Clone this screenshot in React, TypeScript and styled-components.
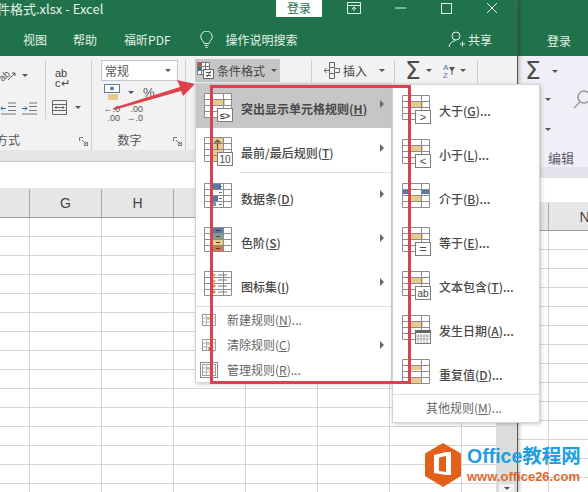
import React from 'react';
import styled, { createGlobalStyle } from 'styled-components';

const GlobalStyle = createGlobalStyle`
  html, body {
    margin: 0;
    padding: 0;
    width: 588px;
    height: 492px;
    overflow: hidden;
    background: #fff;
    font-family: "Noto Sans CJK SC", "Liberation Sans", sans-serif;
  }
`;

const Desktop = styled.div`
  position: relative;
  display: flex;
  width: 588px;
  height: 492px;
  overflow: hidden;
`;

const FrontWindow = styled.div`
  display: flex;
  flex-direction: column;
  width: 518px;
  height: 492px;
  flex: none;
  border-right: 1px solid #4d5a52;
  box-sizing: border-box;
  box-shadow: 2px 0 3px rgba(0, 0, 0, 0.2);
  position: relative;
  z-index: 1;
`;

const BackWindow = styled.div`
  display: flex;
  flex-direction: column;
  flex: 1;
  min-width: 0;
`;

const TitleBar = styled.div`
  display: flex;
  height: 28px;
  background: #20724a;
  color: #e9f3ed;
  overflow: hidden;
`;

const DocTitle = styled.div`
  width: 276px;
  flex: none;
  margin-left: -3px;
  font-size: 13px;
  line-height: 17px;
  white-space: pre;
`;

const SignIn = styled.div`
  width: 46px;
  height: 17px;
  margin-left: 3px;
  background: #fff;
  color: #20724a;
  font-size: 12px;
  line-height: 15px;
  text-align: center;
  flex: none;
`;

const WindowButtons = styled.div`
  display: flex;
  margin-left: 9px;
`;

const WindowButton = styled.div`
  width: 46px;
  height: 16px;
  display: flex;
  align-items: center;
  justify-content: center;
  svg { display: block; }
`;

const TabBar = styled.div`
  display: flex;
  align-items: center;
  gap: 26px;
  height: 28px;
  padding: 0 25px 6px 23px;
  box-sizing: border-box;
  background: #20724a;
  color: #e6f1ea;
  font-size: 12px;
`;

const BackTabBar = styled(TabBar)`
  padding: 0 0 4px 29px;
  white-space: nowrap;
`;

const PdfTab = styled.span`
  margin-left: 1px;
`;

const SearchHint = styled.div`
  display: flex;
  align-items: center;
  gap: 13px;
  margin-left: 3px;
`;

const Share = styled.div`
  display: flex;
  align-items: center;
  gap: 2px;
  margin-left: auto;
`;

const Ribbon = styled.div`
  display: flex;
  height: 94px;
  background: #f2f2f2;
  color: #444;
`;

const RibbonGroup = styled.div<{ $w: number }>`
  display: flex;
  flex-direction: column;
  width: ${p => p.$w}px;
  flex: none;
  box-sizing: border-box;
  margin-top: 4px;
  border-right: 1px solid #cfcfcf;
`;

const GroupBody = styled.div`
  flex: 1;
  display: flex;
  min-height: 0;
`;

const GroupFooter = styled.div<{ $start?: boolean; $shift?: number }>`
  height: 22px;
  display: flex;
  align-items: center;
  justify-content: ${p => (p.$start ? 'flex-start' : 'center')};
  padding-right: ${p => p.$shift ?? 0}px;
  position: relative;
  font-size: 12px;
  color: #555;
  white-space: nowrap;
  overflow: hidden;
`;

const ClippedLabel = styled.span`
  margin-left: -4px;
`;

const Launcher = styled.svg`
  position: absolute;
  right: 3px;
  bottom: 4px;
`;

const ToolColumn = styled.div<{ $w?: number; $divided?: boolean }>`
  display: flex;
  flex-direction: column;
  justify-content: space-between;
  width: ${p => (p.$w ? `${p.$w}px` : 'auto')};
  box-sizing: border-box;
  margin-bottom: 9px;
  padding: 8px 0 4px;
  border-right: ${p => (p.$divided ? '1px solid #cfcfcf' : 'none')};
  flex: none;
`;

const ToolRow = styled.div<{ $gap?: number; $left?: number; $top?: number }>`
  display: flex;
  align-items: center;
  gap: ${p => p.$gap ?? 6}px;
  padding-left: ${p => p.$left ?? 0}px;
  margin-top: ${p => p.$top ?? 0}px;
`;

const Caret = styled.span<{ $left?: number }>`
  display: inline-block;
  width: 0;
  height: 0;
  margin-left: ${p => p.$left ?? 0}px;
  border-left: 3px solid transparent;
  border-right: 3px solid transparent;
  border-top: 3px solid #555;
  flex: none;
`;

const WrapGlyph = styled.div`
  width: 16px;
  font-family: "Liberation Sans", sans-serif;
  font-size: 11px;
  line-height: 10px;
  color: #444;
  padding-left: 1px;
`;

const NumberColumn = styled.div`
  display: flex;
  flex-direction: column;
  width: 100%;
`;

const Combo = styled.div`
  display: flex;
  align-items: center;
  justify-content: space-between;
  width: 77px;
  height: 21px;
  margin-left: 9px;
  padding: 0 6px 0 3px;
  box-sizing: border-box;
  background: #fff;
  border: 1px solid #c6c6c6;
  font-size: 12px;
  color: #555;
`;

const Percent = styled.span`
  margin-left: 1px;
  font-family: "Liberation Sans", sans-serif;
  font-size: 13px;
  color: #555;
`;

const DecimalGlyph = styled.div`
  width: 17px;
  font-family: "Liberation Sans", sans-serif;
  font-size: 9px;
  line-height: 9px;
  color: #555;
  text-align: right;
  b { color: #3f6f94; font-weight: 400; }
`;

const CommandButton = styled.div<{ $active?: boolean; $left: number; $w: number }>`
  display: flex;
  align-items: center;
  gap: 3px;
  width: ${p => p.$w}px;
  height: 23px;
  margin: -1px 0 0 ${p => p.$left}px;
  padding-left: 2px;
  box-sizing: border-box;
  background: ${p => (p.$active ? '#c6c6c6' : 'transparent')};
  font-size: 12px;
  color: #444;
  flex: none;
`;

const SumRow = styled.div`
  display: flex;
  align-items: center;
  align-self: flex-start;
  gap: 5px;
  height: 21px;
  padding-left: 10px;
`;

const SortIcon = styled.svg`
  margin-left: 6px;
`;

const SumSign = styled.span`
  font-family: "DejaVu Sans", sans-serif;
  font-size: 25px;
  line-height: 20px;
  color: #4a4a4a;
`;

const FormulaBand = styled.div`
  height: 11px;
  background: #e6e6e6;
  border-bottom: 1px solid #c9c9c9;
  flex: none;
`;

const FormulaBar = styled.div<{ $h: number }>`
  height: ${p => p.$h}px;
  background: #fff;
  flex: none;
`;

const HeaderRow = styled.div<{ $h: number }>`
  display: flex;
  height: ${p => p.$h}px;
  background: #e6e6e6;
  border-bottom: 1px solid #9c9c9c;
  box-sizing: border-box;
  flex: none;
  overflow: hidden;
`;

const HeaderCell = styled.div<{ $w: number }>`
  width: ${p => p.$w}px;
  flex: none;
  box-sizing: border-box;
  margin-top: 1px;
  border-right: 1px solid #a8a8a8;
  font-family: "Liberation Sans", sans-serif;
  font-size: 14px;
  line-height: 28px;
  color: #444;
  text-align: center;
`;

const SheetArea = styled.div`
  flex: 1;
  display: flex;
  min-height: 0;
`;

const Cells = styled.div<{ $x: number; $y: number }>`
  flex: 1;
  background-color: #fff;
  background-image:
    linear-gradient(to right, #d6d6d6 1px, transparent 1px),
    linear-gradient(to bottom, #d6d6d6 1px, transparent 1px);
  background-size: 72px 19px;
  background-position: ${p => p.$x}px ${p => p.$y}px;
`;

const ScrollTrack = styled.div`
  display: flex;
  flex-direction: column;
  justify-content: flex-end;
  align-items: center;
  width: 21px;
  background: #dcdedc;
  flex: none;
`;

const ScrollButton = styled.div`
  display: flex;
  align-items: center;
  justify-content: center;
  width: 15px;
  height: 8px;
  background: #f4f4f4;
`;

const BackRibbon = styled.div`
  display: grid;
  grid-template-rows: 30px 26px 34px 21px;
  height: 111px;
  background: #f0eff7;
  color: #555;
`;

const BackRow = styled.div<{ $left: number }>`
  display: flex;
  align-items: center;
  gap: 11px;
  padding-left: ${p => p.$left}px;
  white-space: nowrap;
  overflow: hidden;
`;

const SearchGlass = styled.svg`
  flex: none;
  margin-left: 11px;
`;

const BackLabel = styled.div`
  padding: 3px 0 0 30px;
  font-size: 13px;
  line-height: 18px;
  color: #5c5c6a;
`;

const BackBand = styled.div`
  height: 11px;
  background: #e4e3ec;
  flex: none;
`;

const Menu = styled.div<{ $left: number; $top: number; $w: number; $z: number }>`
  position: absolute;
  left: ${p => p.$left}px;
  top: ${p => p.$top}px;
  width: ${p => p.$w}px;
  z-index: ${p => p.$z};
  box-sizing: border-box;
  background: #fff;
  border: 1px solid #d4d4d4;
  box-shadow: 1px 1px 4px rgba(0, 0, 0, 0.22);
  color: #484848;
`;

const BigRow = styled.div<{ $active?: boolean; $pad: number }>`
  display: flex;
  align-items: center;
  gap: 6px;
  height: 44px;
  padding: 4px 7px 0 ${p => p.$pad}px;
  box-sizing: border-box;
  background: ${p => (p.$active ? '#c6c6c6' : 'transparent')};
  font-size: 12px;
  font-weight: ${p => (p.$active ? 700 : 500)};
  white-space: nowrap;
  svg { flex: none; }
`;

const RowArrow = styled.span<{ $lift?: number }>`
  margin-left: auto;
  margin-top: ${p => -(p.$lift ?? 0)}px;
  width: 0;
  height: 0;
  border-top: 4px solid transparent;
  border-bottom: 4px solid transparent;
  border-left: 4px solid #666;
  flex: none;
`;

const SmallRow = styled.div`
  display: flex;
  align-items: center;
  gap: 6px;
  height: 25px;
  padding: 0 7px 0 3px;
  font-size: 12px;
  color: #666;
  svg { flex: none; }
`;

const MenuRule = styled.div<{ $inset?: number; $after?: number }>`
  height: 1px;
  margin-left: ${p => p.$inset ?? 0}px;
  margin-bottom: ${p => p.$after ?? 0}px;
  background: #dedede;
`;

const SubList = styled.div`
  padding-top: 1px;
`;

const FooterRow = styled.div`
  height: 27px;
  line-height: 26px;
  padding-left: 33px;
  font-size: 12px;
  color: #666;
`;

const Key = styled.u`
  text-underline-offset: 1px;
`;

const RedFrame = styled.div`
  position: absolute;
  left: 210px;
  top: 85px;
  width: 201px;
  height: 299px;
  box-sizing: border-box;
  border: 3px solid #d8434f;
  z-index: 5;
  pointer-events: none;
`;

const ArrowOverlay = styled.svg`
  position: absolute;
  left: 110px;
  top: 76px;
  z-index: 5;
`;

const Watermark = styled.div`
  position: absolute;
  left: 425px;
  top: 443px;
  display: flex;
  gap: 6px;
  z-index: 6;
`;

const WatermarkText = styled.div`
  display: flex;
  flex-direction: column;
  font-family: "Liberation Sans", "Noto Sans CJK SC", sans-serif;
  font-weight: 700;
  white-space: nowrap;
`;

const BrandName = styled.div`
  font-size: 19.5px;
  line-height: 26px;
  color: #1f9fe2;
`;

const BrandUrl = styled.div`
  font-size: 13px;
  line-height: 16px;
  color: #e2682a;
`;

type RuleKind = 'highlight' | 'top' | 'bars' | 'scale' | 'icons' | 'gt' | 'lt' | 'between' | 'eq' | 'text' | 'date' | 'dup';

const Tag = ({ label, size = 9 }: { label: string; size?: number }) => (
  <g>
    <rect x="14.5" y="16.5" width="15" height="13" fill="#fff" stroke="#7c7c7c" />
    <text x="22" y="26.5" fontSize={size} textAnchor="middle" fontFamily="Liberation Sans, sans-serif" fill="#444">{label}</text>
  </g>
);

function RuleIcon({ kind }: { kind: RuleKind }) {
  const orange = '#ecc88a';
  return (
    <svg width="32" height="32" viewBox="0 0 32 32">
      <rect x="1.5" y="1.5" width="27" height="24" fill="#fff" />
      {kind === 'top' && <rect x="10" y="2" width="11" height="23" fill={orange} />}
      {['highlight', 'gt', 'lt', 'eq', 'text', 'date'].includes(kind) && <rect x="10" y="7" width="12" height="6" fill={orange} />}
      {kind === 'between' && (
        <>
          <rect x="2" y="7" width="7" height="5" fill="#4f7ba6" />
          <rect x="21" y="7" width="7" height="5" fill="#4f7ba6" />
          <rect x="10" y="13" width="11" height="6" fill={orange} />
        </>
      )}
      {kind === 'dup' && (
        <>
          <rect x="10" y="7" width="11" height="5" fill={orange} />
          <rect x="10" y="19" width="11" height="6" fill={orange} />
        </>
      )}
      {kind === 'bars' && (
        <>
          <rect x="10" y="2" width="8" height="5" fill="#4f7ba6" />
          <rect x="10" y="13" width="5" height="6" fill="#4f7ba6" />
          <rect x="10" y="19" width="3" height="5" fill="#6f97bd" />
          <path d="M16 4.500h3M16 10.500h3M16 16.500h3M16 22.500h3" stroke="#666" />
        </>
      )}
      {kind === 'scale' && (
        <>
          <rect x="10" y="2" width="10" height="5" fill="#4f7ba6" />
          <rect x="10" y="7" width="10" height="6" fill="#7f9f86" />
          <rect x="10" y="13" width="10" height="6" fill="#e9cd86" />
          <rect x="10" y="19" width="10" height="6" fill="#d96f50" />
          <path d="M13 4.500h4M13 10.500h4M13 16.500h4M13 22.500h4" stroke="#444" />
        </>
      )}
      {kind === 'icons' && (
        <>
          <circle cx="11" cy="5" r="1.500" fill="#e29a4a" />
          <circle cx="11" cy="11" r="1.500" fill="#e29a4a" />
          <circle cx="11" cy="16" r="1.500" fill="#d9704a" />
          <circle cx="11" cy="22" r="1.500" fill="#d9704a" />
          <path d="M15 5h9M15 10h9M15 16h9M15 22h9" stroke="#777" />
        </>
      )}
      <path d="M1.500 1.500h27v24h-27zM1.500 7.500h27M1.500 13.500h27M1.500 19.500h27M9.500 1.500v24M20.500 1.500v24" fill="none" stroke="#8d8d8d" />
      {kind === 'top' && <path d="M14.500 14V4M11.500 7l3-3 3 3" fill="none" stroke="#555" strokeWidth="1.200" />}
      {kind === 'highlight' && <Tag label="≤>" />}
      {kind === 'top' && <Tag label="10" size={10} />}
      {kind === 'gt' && <Tag label=">" size={11} />}
      {kind === 'lt' && <Tag label="<" size={11} />}
      {kind === 'eq' && <Tag label="=" size={12} />}
      {kind === 'text' && <Tag label="ab" size={10} />}
      {kind === 'date' && (
        <g>
          <rect x="14.500" y="16.500" width="15" height="13" fill="#fff" stroke="#7c7c7c" />
          <rect x="14" y="16" width="16" height="3" fill="#666" />
          <path d="M17 20v9M20 20v9M23 20v9M26 20v9M15 22h14M15 25h14" stroke="#aaa" />
        </g>
      )}
    </svg>
  );
}

function SmallRuleIcon({ mark }: { mark?: 'eraser' | 'frame' }) {
  return (
    <svg width="22" height="16" viewBox="0 0 22 16">
      {mark === 'frame' && <rect x="1.500" y="0.500" width="17" height="15" fill="none" stroke="#8a8a8a" />}
      <rect x="3.500" y="2.500" width="13" height="11" fill="#fff" stroke="#9a9a9a" />
      <rect x="7" y="5" width="7" height="3" fill="#ecc88a" />
      <path d="M3.500 6h13M3.500 10h13M7.500 2.500v11M12.500 2.500v11" stroke="#b4b4b4" fill="none" />
      {mark === 'eraser' && <path d="M10 10l5 4-2 2-4-4z" fill="#d8605a" />}
    </svg>
  );
}

const Launch = () => (
  <Launcher width="9" height="9" viewBox="0 0 9 9">
    <path d="M.5 4V.5H4M8.500 5v3.500H5M3 3l4 4M7 4.500V7H4.500" fill="none" stroke="#777" />
  </Launcher>
);

const bigRules: { kind: RuleKind; text: string; key: string; active?: boolean }[] = [
  { kind: 'highlight', text: '突出显示单元格规则', key: 'H', active: true },
  { kind: 'top', text: '最前/最后规则', key: 'T' },
  { kind: 'bars', text: '数据条', key: 'D' },
  { kind: 'scale', text: '色阶', key: 'S' },
  { kind: 'icons', text: '图标集', key: 'I' },
];

const subRules: { kind: RuleKind; text: string; key: string }[] = [
  { kind: 'gt', text: '大于', key: 'G' },
  { kind: 'lt', text: '小于', key: 'L' },
  { kind: 'between', text: '介于', key: 'B' },
  { kind: 'eq', text: '等于', key: 'E' },
  { kind: 'text', text: '文本包含', key: 'T' },
  { kind: 'date', text: '发生日期', key: 'A' },
  { kind: 'dup', text: '重复值', key: 'D' },
];

const frontColumns = ['', 'G', 'H'];

export default function App() {
  return (
    <Desktop>
      <GlobalStyle />

      <FrontWindow>
        <TitleBar>
          <DocTitle>件格式.xlsx - Excel</DocTitle>
          <SignIn>登录</SignIn>
          <WindowButtons>
            <WindowButton>
              <svg width="14" height="12" viewBox="0 0 14 12">
                <path d="M.5.5h13v11H.5zM.5 3.500h13M7 9V5M5 7l2-2 2 2" fill="none" stroke="#e9f3ed" />
              </svg>
            </WindowButton>
            <WindowButton>
              <svg width="11" height="2" viewBox="0 0 11 2"><path d="M0 1h11" stroke="#e9f3ed" /></svg>
            </WindowButton>
            <WindowButton>
              <svg width="11" height="11" viewBox="0 0 11 11"><rect x=".5" y=".5" width="10" height="10" fill="none" stroke="#e9f3ed" /></svg>
            </WindowButton>
            <WindowButton>
              <svg width="12" height="12" viewBox="0 0 12 12"><path d="M1 1l10 10M11 1L1 11" stroke="#e9f3ed" /></svg>
            </WindowButton>
          </WindowButtons>
        </TitleBar>

        <TabBar>
          <span>视图</span>
          <span>帮助</span>
          <PdfTab>福昕PDF</PdfTab>
          <SearchHint>
            <svg width="13" height="17" viewBox="0 0 13 17">
              <path d="M4 12.500C3.500 10 .8 9 .8 5.800a5.700 5.700 0 0 1 11.400 0C12.200 9 9.500 10 9 12.500zM4.500 14.500h4M5.500 16.500h2" fill="none" stroke="#e6f1ea" />
            </svg>
            <span>操作说明搜索</span>
          </SearchHint>
          <Share>
            <svg width="18" height="17" viewBox="0 0 18 17">
              <circle cx="8" cy="5" r="4" fill="none" stroke="#e6f1ea" />
              <path d="M1 16c.5-3.500 3-6 6.500-6.500M12 13h5M14.500 10.500v5" fill="none" stroke="#e6f1ea" />
            </svg>
            <span>共享</span>
          </Share>
        </TabBar>

        <Ribbon>
          <RibbonGroup $w={92}>
            <GroupBody>
              <ToolColumn $w={46} $divided>
                <ToolRow $gap={6}>
                  <svg width="16" height="15" viewBox="0 0 16 15">
                    <text x="0" y="12" fontSize="10" fontFamily="Liberation Sans, sans-serif" fill="#555" transform="rotate(-40 4 10)">ab</text>
                    <path d="M8 12l7-7M15 5v3M15 5h-3" fill="none" stroke="#555" />
                  </svg>
                  <Caret />
                </ToolRow>
                <ToolRow $gap={5}>
                  <svg width="16" height="13" viewBox="0 0 16 13">
                    <path d="M1 6.500h5M3 4.500l-2 2 2 2" fill="none" stroke="#3f6f94" />
                    <path d="M8 1h8M8 4.500h8M8 8.500h8M1 12h15" stroke="#777" />
                  </svg>
                  <svg width="16" height="13" viewBox="0 0 16 13">
                    <path d="M1 6.500h5M4 4.500l2 2-2 2" fill="none" stroke="#3f6f94" />
                    <path d="M8 1h8M8 4.500h8M8 8.500h8M1 12h15" stroke="#777" />
                  </svg>
                </ToolRow>
              </ToolColumn>
              <ToolColumn>
                <ToolRow $left={8}>
                  <WrapGlyph>ab<br />c↵</WrapGlyph>
                </ToolRow>
                <ToolRow $left={6} $gap={8}>
                  <svg width="15" height="15" viewBox="0 0 15 15">
                    <path d="M.5.5h14v14H.5zM.5 4.500h14M.5 10.500h14M3 7.500h9M4.500 6l-1.500 1.500L4.500 9M10.500 6l1.500 1.500L10.500 9" fill="none" stroke="#666" />
                  </svg>
                  <Caret />
                </ToolRow>
              </ToolColumn>
            </GroupBody>
            <GroupFooter $start>
              <ClippedLabel>方式</ClippedLabel>
              <Launch />
            </GroupFooter>
          </RibbonGroup>

          <RibbonGroup $w={94}>
            <GroupBody>
              <NumberColumn>
                <Combo>常规<Caret /></Combo>
                <ToolRow $left={12} $gap={8} $top={3}>
                  <svg width="16" height="16" viewBox="0 0 16 16">
                    <rect x=".5" y=".5" width="15" height="8" fill="#fff" stroke="#5a7d92" />
                    <circle cx="8" cy="4.500" r="2" fill="#5a7d92" />
                    <path d="M4 11h10M4 13h10M4 15h10" stroke="#e3bd6d" strokeWidth="1.500" />
                  </svg>
                  <Caret />
                  <Percent>%</Percent>
                </ToolRow>
                <ToolRow $left={11} $gap={6} $top={5}>
                  <DecimalGlyph><b>←</b>.0<br />.00</DecimalGlyph>
                  <DecimalGlyph>.00<br /><b>→</b>.0</DecimalGlyph>
                </ToolRow>
              </NumberColumn>
            </GroupBody>
            <GroupFooter $shift={18}>
              数字
              <Launch />
            </GroupFooter>
          </RibbonGroup>

          <RibbonGroup $w={126}>
            <GroupBody>
              <CommandButton $active $left={9} $w={85}>
                <svg width="17" height="17" viewBox="0 0 17 17">
                  <path d="M.5.5h12v12H.5zM.5 4.500h12M.5 8.500h12M4.500.5v12M8.500.5v12" fill="#fff" stroke="#777" />
                  <rect x="1" y="1" width="3" height="3" fill="#c9503f" />
                  <rect x="1" y="5" width="3" height="3" fill="#3f6f94" />
                  <rect x="6.500" y="7.500" width="10" height="9" fill="#fff" stroke="#666" />
                  <path d="M9 10.500h5M9 13.500h5M10 15l4-6" stroke="#555" />
                </svg>
                条件格式
                <Caret $left={3} />
              </CommandButton>
            </GroupBody>
            <GroupFooter />
          </RibbonGroup>

          <RibbonGroup $w={83}>
            <GroupBody>
              <CommandButton $left={10} $w={72}>
                <svg width="16" height="17" viewBox="0 0 16 17">
                  <path d="M5.500.5h5v5h-5zM5.500 11.500h5v5h-5zM5.500 5.500v6M10.500 6.500h5v4h-5zM0 8.500h5M2.500 6l-2.500 2.500L2.500 11" fill="none" stroke="#666" />
                </svg>
                插入
                <Caret $left={9} />
              </CommandButton>
            </GroupBody>
            <GroupFooter />
          </RibbonGroup>

          <RibbonGroup $w={83}>
            <GroupBody>
              <SumRow>
                <SumSign>Σ</SumSign>
                <Caret />
                <SortIcon width="12" height="16" viewBox="0 0 12 16">
                  <text x="0" y="7" fontSize="8" fontFamily="Liberation Sans, sans-serif" fill="#3f6f94">A</text>
                  <text x="0" y="15" fontSize="8" fontFamily="Liberation Sans, sans-serif" fill="#7b5fa8">Z</text>
                  <path d="M6 4h6L9.500 8v4H8.500V8z" fill="#555" />
                </SortIcon>
                <Caret />
              </SumRow>
            </GroupBody>
            <GroupFooter />
          </RibbonGroup>
        </Ribbon>

        <FormulaBand />
        <FormulaBar $h={26} />
        <HeaderRow $h={30}>
          {frontColumns.map((c, i) => (
            <HeaderCell key={c || 'corner'} $w={i === 0 ? 30 : 72}>{c}</HeaderCell>
          ))}
        </HeaderRow>
        <SheetArea>
          <Cells $x={29} $y={18} />
          <ScrollTrack>
            <ScrollButton><Caret /></ScrollButton>
          </ScrollTrack>
        </SheetArea>
      </FrontWindow>

      <BackWindow>
        <TitleBar />
        <BackTabBar>
          <span>登录</span>
        </BackTabBar>
        <BackRibbon>
          <BackRow $left={7}><SumSign>Σ</SumSign><Caret /></BackRow>
          <BackRow $left={27}>
            <Caret />
            <SearchGlass width="18" height="20" viewBox="0 0 18 20">
              <circle cx="11" cy="8" r="6" fill="none" stroke="#999" strokeWidth="1.500" />
              <path d="M7 13l-6 6" stroke="#999" strokeWidth="1.500" />
            </SearchGlass>
          </BackRow>
          <BackRow $left={27}><Caret /></BackRow>
          <BackLabel>编辑</BackLabel>
        </BackRibbon>
        <BackBand />
        <FormulaBar $h={24} />
        <HeaderRow $h={29}>
          <HeaderCell $w={31} />
          <HeaderCell $w={72}>N</HeaderCell>
        </HeaderRow>
        <SheetArea>
          <Cells $x={30} $y={18} />
        </SheetArea>
      </BackWindow>

      <Menu $left={195} $top={83} $w={197} $z={2}>
        {bigRules.map((r, i) => (
          <React.Fragment key={r.key}>
            <BigRow $active={r.active} $pad={7}>
              <RuleIcon kind={r.kind} />
              <span>{r.text}(<Key>{r.key}</Key>)</span>
              <RowArrow $lift={8} />
            </BigRow>
            {i === 1 && <MenuRule $inset={44} $after={1} />}
            {i === 4 && <MenuRule />}
          </React.Fragment>
        ))}
        <SmallRow><SmallRuleIcon /><span>新建规则(<Key>N</Key>)...</span></SmallRow>
        <SmallRow><SmallRuleIcon mark="eraser" /><span>清除规则(<Key>C</Key>)</span><RowArrow /></SmallRow>
        <SmallRow><SmallRuleIcon mark="frame" /><span>管理规则(<Key>R</Key>)...</span></SmallRow>
      </Menu>

      <Menu $left={392} $top={84} $w={148} $z={3}>
        <SubList>
          {subRules.map(r => (
            <BigRow key={r.key} $pad={8}>
              <RuleIcon kind={r.kind} />
              <span>{r.text}(<Key>{r.key}</Key>)...</span>
            </BigRow>
          ))}
        </SubList>
        <MenuRule />
        <FooterRow>其他规则(<Key>M</Key>)...</FooterRow>
      </Menu>

      <RedFrame />
      <ArrowOverlay width="90" height="40" viewBox="0 0 90 40">
        <path d="M3 32L70 11L67 4L85 8L73 20L71 15L4 34z" fill="#e0404a" />
      </ArrowOverlay>

      <Watermark>
        <svg width="36" height="44" viewBox="0 0 36 44">
          <path d="M18 0L36 10.500V33L18 44L0 33V10.500z" fill="#e2601a" />
          <path d="M9 12L21 9H26V32H21L9 30zM14 14.500V28L21 29V13z" fill="#fff" fillRule="evenodd" />
        </svg>
        <WatermarkText>
          <BrandName>Office教程网</BrandName>
          <BrandUrl>www.office26.com</BrandUrl>
        </WatermarkText>
      </Watermark>
    </Desktop>
  );
}
